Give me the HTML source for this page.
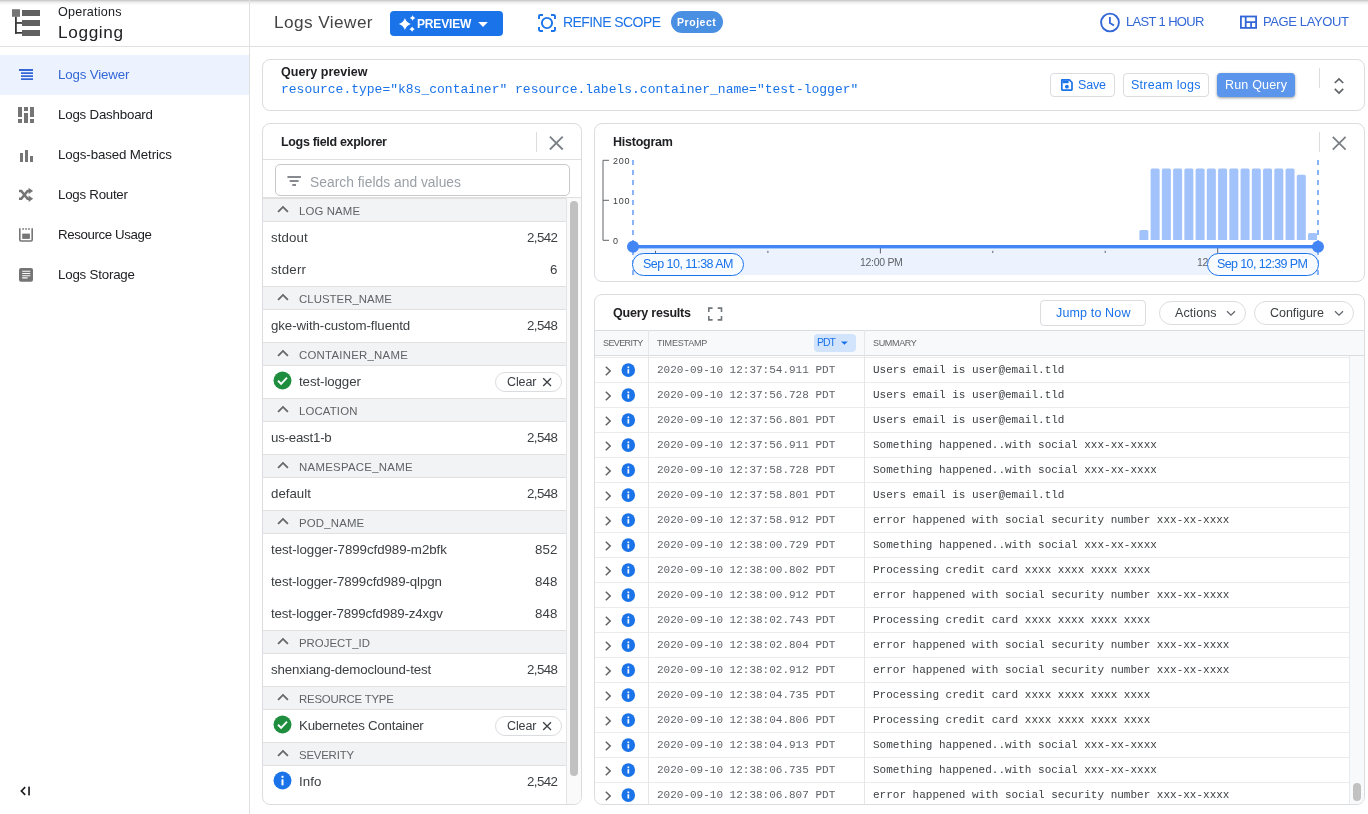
<!DOCTYPE html>
<html>
<head>
<meta charset="utf-8">
<title>Logs Viewer</title>
<style>
*{box-sizing:border-box;margin:0;padding:0}
html,body{width:1368px;height:814px;overflow:hidden;background:#fff}
body{font-family:"Liberation Sans",sans-serif;font-size:14px;color:#202124;position:relative}
.abs{position:absolute}
.t{position:absolute;white-space:nowrap;line-height:1;font-style:normal;will-change:transform}
svg{position:absolute;overflow:visible}
.mono{font-family:"Liberation Mono",monospace}
#topshadow{left:0;top:0;width:1368px;height:6px;background:linear-gradient(to bottom,#cdcdcd 0,#cdcdcd 1px,#e1e1e1 1px,#e1e1e1 2px,#eee 2px,#eee 3px,#f6f6f6 3px,#f6f6f6 4px,#fbfbfb 4px,#fbfbfb 5px,#fefefe 5px,#fefefe 6px)}
#side{left:0;top:0;width:250px;height:814px;border-right:1px solid #e0e0e0}
#sidehead{left:0;top:0;width:249px;height:47px;border-bottom:1px solid #e0e0e0}
#hdr{left:250px;top:0;width:1118px;height:47px;border-bottom:1px solid #e0e0e0}
.card{position:absolute;border:1px solid #dadce0;border-radius:8px;background:#fff}
.navsel{left:0;top:55px;width:249px;height:40px;background:#ecf3fe}
.btn{position:absolute;border:1px solid #dadce0;border-radius:4px;background:#fff}
.pill{position:absolute;border:1px solid #dadce0;border-radius:12px;background:#fff}
.sec{position:absolute;left:263px;width:303px;height:24px;background:#f1f3f4;border-top:1px solid #e0e0e0;border-bottom:1px solid #e0e0e0}
.hl{position:absolute;height:1px;background:#e0e0e0}
.vl{position:absolute;width:1px;background:#dadce0}
</style>
</head>
<body>
<div class="abs" id="topshadow"></div>
<div class="abs" id="side"></div>
<div class="abs" id="sidehead"></div>
<div class="abs" id="hdr"></div>

<!-- ===== SIDEBAR ===== -->
<svg style="left:0;top:0" width="60" height="47" viewBox="0 0 60 47">
  <rect x="12" y="9.2" width="8" height="7.6" fill="#757575"/>
  <rect x="22" y="10" width="18" height="6" fill="#616161"/>
  <rect x="22" y="20" width="18" height="6" fill="#616161"/>
  <rect x="22" y="30" width="18" height="6" fill="#616161"/>
  <rect x="15" y="16.8" width="1.8" height="16.9" fill="#383838"/><rect x="15" y="22.1" width="7" height="1.7" fill="#383838"/><rect x="15" y="32" width="7" height="1.7" fill="#383838"/>
</svg>
<div class="t" style="left:57.87px;top:6.03px;font-size:12.6px;letter-spacing:0.204px">Operations</div>
<div class="t" style="left:57.83px;top:24.04px;font-size:17.2px;letter-spacing:0.655px">Logging</div>

<div class="abs navsel"></div>
<svg style="left:0;top:55px" width="60" height="40" viewBox="0 55 60 40">
  <path d="M19 70H33M21 73.1H33M21 76.2H33M21 79.2H33" stroke="#3367d6" stroke-width="1.8" fill="none"/>
</svg>
<div class="t" style="left:57.87px;top:67.74px;font-size:13.3px;color:#3367d6;letter-spacing:-0.147px">Logs Viewer</div>
<div class="t" style="left:57.87px;top:107.74px;font-size:13.3px;letter-spacing:-0.201px">Logs Dashboard</div>
<div class="t" style="left:57.87px;top:147.74px;font-size:13.3px;letter-spacing:-0.122px">Logs-based Metrics</div>
<div class="t" style="left:57.87px;top:187.74px;font-size:13.3px;letter-spacing:-0.249px">Logs Router</div>
<div class="t" style="left:57.87px;top:227.74px;font-size:13.3px;letter-spacing:-0.391px">Resource Usage</div>
<div class="t" style="left:57.87px;top:267.74px;font-size:13.3px;letter-spacing:-0.195px">Logs Storage</div>

<!-- ===== HEADER ===== -->
<div class="t" style="left:274.13px;top:13.74px;font-size:17.2px;color:#444;letter-spacing:0.432px">Logs Viewer</div>

<!-- ===== CARDS ===== -->
<div class="card" id="qp" style="left:262px;top:59px;width:1103px;height:52px"></div>
<div class="card" id="lfe" style="left:262px;top:123px;width:320px;height:682px"></div>
<div class="card" id="hist" style="left:594px;top:123px;width:771px;height:159px"></div>
<div class="card" id="qr" style="left:594px;top:294px;width:771px;height:511px"></div>


<!-- sidebar icons -->
<svg style="left:0;top:95px" width="60" height="200" viewBox="0 95 60 200">
  <g fill="#757575">
    <!-- dashboard -->
    <rect x="18" y="107" width="4" height="10"/><rect x="18" y="119" width="4" height="4"/>
    <rect x="24" y="107" width="4" height="4"/><rect x="24" y="113" width="4" height="10"/>
    <rect x="30" y="107" width="4" height="10"/><rect x="30" y="119" width="4" height="4"/>
    <!-- metrics -->
    <rect x="20" y="153" width="3" height="9"/><rect x="25" y="150" width="3" height="12"/><rect x="30" y="156" width="3" height="6"/>
  </g>
  <!-- router / shuffle -->
  <path d="M19 190.9H21.3L27.6 198.7H29.5M19 198.7H21.3L27.6 190.9H29.5" fill="none" stroke="#757575" stroke-width="2.5"/>
  <path d="M28.6 187.7L33.1 190.9L28.6 194.1ZM28.6 195.5L33.1 198.7L28.6 201.9Z" fill="#757575"/>
  <!-- resource usage -->
  <path d="M19.8 228.2V239.8a1.2 1.2 0 0 0 1.2 1.2H31a1.2 1.2 0 0 0 1.2 -1.2V228.2" fill="none" stroke="#757575" stroke-width="1.6"/>
  <path d="M22.3 228.9H24M25.2 228.9H26.9M28.1 228.9H29.8" stroke="#757575" stroke-width="1.5" fill="none"/>
  <rect x="22.2" y="233.6" width="7.7" height="5.3" fill="#757575"/>
  <!-- storage -->
  <rect x="19" y="267.9" width="14" height="13.8" rx="2" fill="#757575"/>
  <path d="M22.2 271.3H30.3M22.2 273.5H30.3M22.2 275.7H30.3M22.2 277.9H27.6" stroke="#fff" stroke-width="1.1" fill="none"/>
  </svg>
<!-- collapse -->
<svg style="left:18px;top:784px" width="16" height="14" viewBox="0 0 16 14"><path d="M7.2 3.2L3.4 7l3.8 3.8" fill="none" stroke="#202124" stroke-width="1.7"/><rect x="10.2" y="2.6" width="1.7" height="8.8" fill="#202124"/></svg>

<!-- header controls -->
<div class="abs" style="left:390px;top:11px;width:113px;height:25px;background:#1a73e8;border-radius:4px"></div>
<svg style="left:390px;top:11px" width="113" height="25" viewBox="390 11 113 25">
  <path fill="#fff" d="M404.9 17.9 Q406.3 22.5 410.8 23.9 Q406.3 25.3 404.9 30 Q403.5 25.3 398.9 23.9 Q403.5 22.5 404.9 17.9Z"/>
  <path fill="#fff" d="M412.6 15.3 Q413.3 17.3 415.4 18 Q413.3 18.7 412.6 20.7 Q411.9 18.7 409.8 18 Q411.9 17.3 412.6 15.3Z"/>
  <path fill="#fff" d="M412.1 26.6 Q412.8 28.5 414.7 29.2 Q412.8 29.9 412.1 31.8 Q411.4 29.9 409.5 29.2 Q411.4 28.5 412.1 26.6Z"/>
  <path fill="#fff" d="M478.2 22.1H487.9L483.05 27.1Z"/>
</svg>
<div class="t" style="left:416.88px;top:17.54px;font-size:12px;color:#fff;font-weight:bold;letter-spacing:-0.154px">PREVIEW</div>

<svg style="left:530px;top:5px" width="40" height="37" viewBox="530 5 40 37">
  <g fill="none" stroke="#1a73e8" stroke-width="1.9">
    <circle cx="547" cy="23" r="5.1"/>
    <path d="M543 15H540.2a1.2 1.2 0 0 0 -1.2 1.2V19M551 15h2.8a1.2 1.2 0 0 1 1.2 1.2V19M543 31H540.2a1.2 1.2 0 0 1 -1.2 -1.2V27M551 31h2.8a1.2 1.2 0 0 0 1.2 -1.2V27"/>
  </g>
</svg>
<div class="t" style="left:562.86px;top:14.95px;font-size:14px;color:#1a73e8;letter-spacing:-0.569px">REFINE SCOPE</div>
<div class="abs" style="left:671px;top:11px;width:52px;height:22px;background:#4a90e2;border-radius:11px"></div>
<div class="t" style="left:677.39px;top:16.51px;font-size:10.5px;color:#fff;font-weight:bold;letter-spacing:0.543px">Project</div>

<svg style="left:1095px;top:8px" width="30" height="30" viewBox="1095 8 30 30">
  <circle cx="1110" cy="22.5" r="8.9" fill="none" stroke="#3367d6" stroke-width="1.9"/>
  <path d="M1109.9 17V23L1114 25.6" fill="none" stroke="#3367d6" stroke-width="1.8"/>
</svg>
<div class="t" style="left:1125.87px;top:15.2px;font-size:13px;color:#3367d6;letter-spacing:-0.656px">LAST 1 HOUR</div>
<svg style="left:1235px;top:10px" width="30" height="25" viewBox="1235 10 30 25">
  <g fill="none" stroke="#3367d6" stroke-width="1.8">
    <rect x="1240.9" y="16.5" width="15.2" height="11.4"/>
    <path d="M1245.7 16.5V28M1245.7 22.2H1256M1251.1 22.2V28"/>
  </g>
</svg>
<div class="t" style="left:1263.37px;top:15.2px;font-size:13px;color:#3367d6;letter-spacing:-0.387px">PAGE LAYOUT</div>

<!-- query preview -->
<div class="t" style="left:280.88px;top:66.02px;font-size:12.5px;color:#202124;font-weight:bold;letter-spacing:0.023px">Query preview</div>
<div class="t mono" style="left:280.87px;top:82.54px;font-size:13px;color:#1a73e8">resource.type="k8s_container" resource.labels.container_name="test-logger"</div>
<div class="btn" style="left:1050px;top:73px;width:65px;height:24px"></div>
<svg style="left:1058px;top:76px" width="18" height="18" viewBox="1058 76 18 18">
  <path d="M1061.8 79.9H1069.4L1072 82.5V89.2a1 1 0 0 1 -1 1H1062.8a1 1 0 0 1 -1 -1Z" fill="none" stroke="#1a73e8" stroke-width="1.7" stroke-linejoin="round"/>
  <rect x="1062.6" y="80.6" width="6" height="2.6" fill="#1a73e8"/>
  <circle cx="1066.9" cy="86.7" r="1.9" fill="#1a73e8"/>
</svg>
<div class="t" style="left:1078.17px;top:78.82px;font-size:12.5px;color:#1a73e8;letter-spacing:-0.188px">Save</div>
<div class="btn" style="left:1123px;top:73px;width:86px;height:24px"></div>
<div class="t" style="left:1131.47px;top:78.82px;font-size:12.5px;color:#1a73e8;letter-spacing:0.273px">Stream logs</div>
<div class="abs" style="left:1217px;top:73px;width:78px;height:24px;border-radius:4px;background:#5b95ec;box-shadow:0 1px 2px rgba(60,64,67,.35),0 1px 3px 1px rgba(60,64,67,.15)"></div>
<div class="t" style="left:1225.47px;top:78.82px;font-size:12.5px;color:#fff;letter-spacing:0.186px">Run Query</div>
<div class="vl" style="left:1319px;top:68px;height:20px"></div>
<svg style="left:1330px;top:74px" width="18" height="24" viewBox="1330 74 18 24">
  <path d="M1334.8 83L1339 78.9L1343.2 83M1334.8 88.9L1339 93L1343.2 88.9" fill="none" stroke="#5f6368" stroke-width="1.7"/>
</svg>
<!-- ===== logs field explorer ===== -->
<div class="t" style="left:281.38px;top:135.52px;font-size:12.5px;color:#202124;font-weight:bold;letter-spacing:-0.328px">Logs field explorer</div>
<div class="vl" style="left:536px;top:132px;height:20px"></div>
<svg style="left:545px;top:132px" width="22" height="22" viewBox="545 132 22 22"><path d="M549.9 136.7L562.7 149.5M562.7 136.7L549.9 149.5" stroke="#7a8086" stroke-width="1.8" fill="none"/></svg>
<div class="hl" style="left:263px;top:159px;width:318px"></div>
<div class="abs" style="left:275px;top:164px;width:295px;height:32px;border:1px solid #c6c8ca;border-radius:5px"></div>
<svg style="left:285px;top:172px" width="18" height="18" viewBox="285 172 18 18"><path d="M287.4 177H300.9M289.7 181H298.6M292.3 185H296" stroke="#5f6368" stroke-width="1.4" fill="none"/></svg>
<div class="t" style="left:309.86px;top:175.52px;font-size:13.8px;color:#9aa0a6;letter-spacing:0.028px">Search fields and values</div>
<div class="abs" style="left:566px;top:198px;width:15px;height:606px;background:#fafafa;border-left:1px solid #e4e4e4;border-bottom-right-radius:7px"></div>
<div class="abs" style="left:570px;top:201px;width:8px;height:575px;background:#c1c1c1;border-radius:4px"></div>
<div class="hl" style="left:263px;top:197px;width:318px"></div>
<div class="sec" style="top:198px"></div>
<svg style="left:276px;top:202px" width="14" height="12" viewBox="0 0 14 12"><path d="M2.1 9.8L7 4.9L11.9 9.8" stroke="#666" stroke-width="1.8" fill="none"/></svg>
<div class="t" style="left:298.89px;top:205.55px;font-size:11.4px;color:#5f6368;letter-spacing:0.123px">LOG NAME</div>
<div class="t" style="left:271.27px;top:230.74px;font-size:13.3px;color:#3c4043;letter-spacing:0.106px">stdout</div>
<div class="t" style="right:810.2px;top:230.74px;font-size:13.3px;color:#3c4043;letter-spacing:-0.579px;margin-right:0.579px">2,542</div>
<div class="t" style="left:271.27px;top:262.74px;font-size:13.3px;color:#3c4043;letter-spacing:0.193px">stderr</div>
<div class="t" style="right:810.2px;top:262.74px;font-size:13.3px;color:#3c4043">6</div>
<div class="sec" style="top:286px"></div>
<svg style="left:276px;top:290px" width="14" height="12" viewBox="0 0 14 12"><path d="M2.1 9.8L7 4.9L11.9 9.8" stroke="#666" stroke-width="1.8" fill="none"/></svg>
<div class="t" style="left:298.89px;top:293.55px;font-size:11.4px;color:#5f6368;letter-spacing:0.034px">CLUSTER_NAME</div>
<div class="t" style="left:271.27px;top:318.74px;font-size:13.3px;color:#3c4043;letter-spacing:-0.086px">gke-with-custom-fluentd</div>
<div class="t" style="right:810.2px;top:318.74px;font-size:13.3px;color:#3c4043;letter-spacing:-0.579px;margin-right:0.579px">2,548</div>
<div class="sec" style="top:342px"></div>
<svg style="left:276px;top:346px" width="14" height="12" viewBox="0 0 14 12"><path d="M2.1 9.8L7 4.9L11.9 9.8" stroke="#666" stroke-width="1.8" fill="none"/></svg>
<div class="t" style="left:298.89px;top:349.55px;font-size:11.4px;color:#5f6368;letter-spacing:0.255px">CONTAINER_NAME</div>
<svg style="left:272.5px;top:371px" width="19" height="19" viewBox="0 0 19 19"><circle cx="9.5" cy="9.5" r="9" fill="#1e8e3e"/><path d="M5 9.8L8.1 12.8L14 6.7" stroke="#fff" stroke-width="1.9" fill="none"/></svg>
<div class="t" style="left:299.17px;top:374.74px;font-size:13.3px;color:#3c4043;letter-spacing:-0.096px">test-logger</div>
<div class="abs" style="left:495px;top:372px;width:67px;height:20px;border:1px solid #dadce0;border-radius:10px;background:#fff"></div>
<div class="t" style="left:506.88px;top:376.02px;font-size:12.5px;color:#3c4043;letter-spacing:-0.109px">Clear</div>
<svg style="left:541px;top:376px" width="12" height="12" viewBox="0 0 12 12"><path d="M2.2 2.2L10 10M10 2.2L2.2 10" stroke="#3c4043" stroke-width="1.3" fill="none"/></svg>
<div class="sec" style="top:398px"></div>
<svg style="left:276px;top:402px" width="14" height="12" viewBox="0 0 14 12"><path d="M2.1 9.8L7 4.9L11.9 9.8" stroke="#666" stroke-width="1.8" fill="none"/></svg>
<div class="t" style="left:298.89px;top:405.55px;font-size:11.4px;color:#5f6368;letter-spacing:0.144px">LOCATION</div>
<div class="t" style="left:271.27px;top:430.74px;font-size:13.3px;color:#3c4043;letter-spacing:-0.229px">us-east1-b</div>
<div class="t" style="right:810.2px;top:430.74px;font-size:13.3px;color:#3c4043;letter-spacing:-0.579px;margin-right:0.579px">2,548</div>
<div class="sec" style="top:454px"></div>
<svg style="left:276px;top:458px" width="14" height="12" viewBox="0 0 14 12"><path d="M2.1 9.8L7 4.9L11.9 9.8" stroke="#666" stroke-width="1.8" fill="none"/></svg>
<div class="t" style="left:298.89px;top:461.55px;font-size:11.4px;color:#5f6368;letter-spacing:0.282px">NAMESPACE_NAME</div>
<div class="t" style="left:271.27px;top:486.74px;font-size:13.3px;color:#3c4043;letter-spacing:-0.012px">default</div>
<div class="t" style="right:810.2px;top:486.74px;font-size:13.3px;color:#3c4043;letter-spacing:-0.579px;margin-right:0.579px">2,548</div>
<div class="sec" style="top:510px"></div>
<svg style="left:276px;top:514px" width="14" height="12" viewBox="0 0 14 12"><path d="M2.1 9.8L7 4.9L11.9 9.8" stroke="#666" stroke-width="1.8" fill="none"/></svg>
<div class="t" style="left:298.89px;top:517.55px;font-size:11.4px;color:#5f6368;letter-spacing:0.18px">POD_NAME</div>
<div class="t" style="left:271.27px;top:542.74px;font-size:13.3px;color:#3c4043;letter-spacing:-0.057px">test-logger-7899cfd989-m2bfk</div>
<div class="t" style="right:810.2px;top:542.74px;font-size:13.3px;color:#3c4043;letter-spacing:0.139px;margin-right:-0.139px">852</div>
<div class="t" style="left:271.27px;top:574.74px;font-size:13.3px;color:#3c4043;letter-spacing:-0.106px">test-logger-7899cfd989-qlpgn</div>
<div class="t" style="right:810.2px;top:574.74px;font-size:13.3px;color:#3c4043;letter-spacing:0.139px;margin-right:-0.139px">848</div>
<div class="t" style="left:271.27px;top:606.74px;font-size:13.3px;color:#3c4043;letter-spacing:-0.147px">test-logger-7899cfd989-z4xgv</div>
<div class="t" style="right:810.2px;top:606.74px;font-size:13.3px;color:#3c4043;letter-spacing:0.139px;margin-right:-0.139px">848</div>
<div class="sec" style="top:630px"></div>
<svg style="left:276px;top:634px" width="14" height="12" viewBox="0 0 14 12"><path d="M2.1 9.8L7 4.9L11.9 9.8" stroke="#666" stroke-width="1.8" fill="none"/></svg>
<div class="t" style="left:298.89px;top:637.55px;font-size:11.4px;color:#5f6368">PROJECT_ID</div>
<div class="t" style="left:271.27px;top:662.74px;font-size:13.3px;color:#3c4043;letter-spacing:-0.133px">shenxiang-democlound-test</div>
<div class="t" style="right:810.2px;top:662.74px;font-size:13.3px;color:#3c4043;letter-spacing:-0.579px;margin-right:0.579px">2,548</div>
<div class="sec" style="top:686px"></div>
<svg style="left:276px;top:690px" width="14" height="12" viewBox="0 0 14 12"><path d="M2.1 9.8L7 4.9L11.9 9.8" stroke="#666" stroke-width="1.8" fill="none"/></svg>
<div class="t" style="left:298.89px;top:693.55px;font-size:11.4px;color:#5f6368;letter-spacing:-0.206px">RESOURCE TYPE</div>
<svg style="left:272.5px;top:715px" width="19" height="19" viewBox="0 0 19 19"><circle cx="9.5" cy="9.5" r="9" fill="#1e8e3e"/><path d="M5 9.8L8.1 12.8L14 6.7" stroke="#fff" stroke-width="1.9" fill="none"/></svg>
<div class="t" style="left:298.87px;top:718.74px;font-size:13.3px;color:#3c4043;letter-spacing:-0.242px">Kubernetes Container</div>
<div class="abs" style="left:495px;top:716px;width:67px;height:20px;border:1px solid #dadce0;border-radius:10px;background:#fff"></div>
<div class="t" style="left:506.88px;top:720.02px;font-size:12.5px;color:#3c4043;letter-spacing:-0.109px">Clear</div>
<svg style="left:541px;top:720px" width="12" height="12" viewBox="0 0 12 12"><path d="M2.2 2.2L10 10M10 2.2L2.2 10" stroke="#3c4043" stroke-width="1.3" fill="none"/></svg>
<div class="sec" style="top:742px"></div>
<svg style="left:276px;top:746px" width="14" height="12" viewBox="0 0 14 12"><path d="M2.1 9.8L7 4.9L11.9 9.8" stroke="#666" stroke-width="1.8" fill="none"/></svg>
<div class="t" style="left:298.89px;top:749.55px;font-size:11.4px;color:#5f6368;letter-spacing:-0.192px">SEVERITY</div>
<svg style="left:272.5px;top:771px" width="19" height="19" viewBox="0 0 19 19"><circle cx="9.5" cy="9.5" r="9" fill="#1a73e8"/><rect x="8.5" y="8.3" width="2" height="6" fill="#fff"/><rect x="8.5" y="4.8" width="2" height="2.1" fill="#fff"/></svg>
<div class="t" style="left:298.87px;top:774.74px;font-size:13.3px;color:#3c4043;letter-spacing:0.059px">Info</div>
<div class="t" style="right:810.2px;top:774.74px;font-size:13.3px;color:#3c4043;letter-spacing:-0.579px;margin-right:0.579px">2,542</div>
<!-- ===== histogram ===== -->
<div class="t" style="left:613.17px;top:136.22px;font-size:12.5px;color:#202124;font-weight:bold;letter-spacing:-0.236px">Histogram</div>
<div class="vl" style="left:1319px;top:132px;height:20px"></div>
<svg style="left:1328px;top:132px" width="22" height="22" viewBox="1328 132 22 22"><path d="M1332.8 136.8L1345.6 149.6M1345.6 136.8L1332.8 149.6" stroke="#7a8086" stroke-width="1.8" fill="none"/></svg>
<svg style="left:595px;top:124px" width="769" height="157" viewBox="595 124 769 157">
<rect x="633" y="248" width="685" height="27" fill="#edf3fe"/>
<g fill="#a1c2fa" transform="translate(-0.9,0)"><path d="M1140.28 240V231.4a1.5 1.5 0 0 1 1.5 -1.5h6a1.5 1.5 0 0 1 1.5 1.5V240Z"/><path d="M1151.52 240V169.9a1.5 1.5 0 0 1 1.5 -1.5h6a1.5 1.5 0 0 1 1.5 1.5V240Z"/><path d="M1162.77 240V169.9a1.5 1.5 0 0 1 1.5 -1.5h6a1.5 1.5 0 0 1 1.5 1.5V240Z"/><path d="M1174.01 240V169.9a1.5 1.5 0 0 1 1.5 -1.5h6a1.5 1.5 0 0 1 1.5 1.5V240Z"/><path d="M1185.26 240V169.9a1.5 1.5 0 0 1 1.5 -1.5h6a1.5 1.5 0 0 1 1.5 1.5V240Z"/><path d="M1196.50 240V169.9a1.5 1.5 0 0 1 1.5 -1.5h6a1.5 1.5 0 0 1 1.5 1.5V240Z"/><path d="M1207.74 240V169.9a1.5 1.5 0 0 1 1.5 -1.5h6a1.5 1.5 0 0 1 1.5 1.5V240Z"/><path d="M1218.99 240V169.9a1.5 1.5 0 0 1 1.5 -1.5h6a1.5 1.5 0 0 1 1.5 1.5V240Z"/><path d="M1230.23 240V169.9a1.5 1.5 0 0 1 1.5 -1.5h6a1.5 1.5 0 0 1 1.5 1.5V240Z"/><path d="M1241.48 240V169.9a1.5 1.5 0 0 1 1.5 -1.5h6a1.5 1.5 0 0 1 1.5 1.5V240Z"/><path d="M1252.72 240V169.9a1.5 1.5 0 0 1 1.5 -1.5h6a1.5 1.5 0 0 1 1.5 1.5V240Z"/><path d="M1263.96 240V169.9a1.5 1.5 0 0 1 1.5 -1.5h6a1.5 1.5 0 0 1 1.5 1.5V240Z"/><path d="M1275.21 240V169.9a1.5 1.5 0 0 1 1.5 -1.5h6a1.5 1.5 0 0 1 1.5 1.5V240Z"/><path d="M1286.45 240V169.9a1.5 1.5 0 0 1 1.5 -1.5h6a1.5 1.5 0 0 1 1.5 1.5V240Z"/><path d="M1297.70 240V176.2a1.5 1.5 0 0 1 1.5 -1.5h6a1.5 1.5 0 0 1 1.5 1.5V240Z"/><path d="M1308.94 240V234.5a1.5 1.5 0 0 1 1.5 -1.5h6a1.5 1.5 0 0 1 1.5 1.5V240Z"/></g>
<path d="M609 160.3H603V240.3H609M603 200.3H609" fill="none" stroke="#5f6368" stroke-width="1"/>
<path d="M633 160V275M1318 160V275" stroke="#8ab4f8" stroke-width="2" stroke-dasharray="5 5" fill="none"/>
<path d="M655.5 250.8V253M767.9 250.8V253M880.4 248V253.4M992.8 250.8V253M1105.2 250.8V253M1217.7 248V253.4" stroke="#5f6368" stroke-width="1" fill="none"/>
<rect x="633" y="245" width="685" height="3.4" fill="#4285f4"/>
<circle cx="633" cy="246.7" r="6" fill="#4285f4"/><circle cx="1318" cy="246.7" r="6" fill="#4285f4"/>
</svg>
<div class="t" style="left:613.31px;top:156.78px;font-size:9px;color:#3c4043;letter-spacing:0.792px">200</div>
<div class="t" style="left:613.31px;top:196.78px;font-size:9px;color:#3c4043;letter-spacing:0.792px">100</div>
<div class="t" style="left:613.31px;top:236.78px;font-size:9px;color:#3c4043">0</div>
<div class="t" style="left:860.19px;top:257.31px;font-size:10.5px;color:#5f6368;letter-spacing:-0.298px">12:00 PM</div>
<div class="t" style="left:1197.39px;top:257.31px;font-size:10.5px;color:#5f6368;letter-spacing:-0.298px">12:30 PM</div>
<div class="abs" style="left:632px;top:253px;width:112px;height:23px;border:1.2px solid #1a73e8;border-radius:11.5px;background:#f8fbff"></div>
<div class="t" style="left:643.17px;top:258.22px;font-size:12.5px;color:#1a73e8;letter-spacing:-0.534px">Sep 10, 11:38 AM</div>
<div class="abs" style="left:1206.5px;top:253px;width:112px;height:23px;border:1.2px solid #1a73e8;border-radius:11.5px;background:#f8fbff"></div>
<div class="t" style="left:1216.88px;top:258.22px;font-size:12.5px;color:#1a73e8;letter-spacing:-0.609px">Sep 10, 12:39 PM</div>
<!-- ===== query results ===== -->
<div class="t" style="left:613.17px;top:307.22px;font-size:12.5px;color:#202124;font-weight:bold;letter-spacing:-0.221px">Query results</div>
<svg style="left:706px;top:305px" width="18" height="18" viewBox="706 305 18 18"><path d="M708.8 312V308.1H712.6M717.7 308.1H721.5V312M721.5 316V319.9H717.7M712.6 319.9H708.8V316" stroke="#70757a" stroke-width="1.6" fill="none"/></svg>
<div class="btn" style="left:1040px;top:300px;width:106px;height:26px"></div>
<div class="t" style="left:1055.88px;top:307.12px;font-size:12.5px;color:#1a73e8;letter-spacing:0.148px">Jump to Now</div>
<div class="pill" style="left:1159px;top:301px;width:87px;height:24px"></div>
<div class="t" style="left:1174.88px;top:307.12px;font-size:12.5px;color:#3c4043;letter-spacing:0.073px">Actions</div>
<svg style="left:1224px;top:307px" width="14" height="12" viewBox="0 0 14 12"><path d="M3 4.3L7 8.2L11 4.3" stroke="#5f6368" stroke-width="1.2" fill="none"/></svg>
<div class="pill" style="left:1254px;top:301px;width:100px;height:24px"></div>
<div class="t" style="left:1270.17px;top:307.12px;font-size:12.5px;color:#3c4043;letter-spacing:-0.033px">Configure</div>
<svg style="left:1332px;top:307px" width="14" height="12" viewBox="0 0 14 12"><path d="M3 4.3L7 8.2L11 4.3" stroke="#5f6368" stroke-width="1.2" fill="none"/></svg>
<div class="abs" id="tbl" style="left:595px;top:330px;width:769px;height:474px;overflow:hidden;border-bottom-left-radius:7px;border-bottom-right-radius:7px">
<div class="abs" style="left:0;top:0;width:769px;height:26px;background:#f8f9fa;border-top:1px solid #dadce0;border-bottom:1px solid #dadce0"></div>
<div class="abs" style="left:754px;top:26px;width:15px;height:448px;background:#f8f9fa;border-left:1px solid #e8eaed"></div>
<div class="abs" style="left:758px;top:453px;width:8px;height:18px;background:#c1c1c1;border-radius:4px"></div>
<div class="abs" style="left:219px;top:4px;width:42px;height:18px;background:#d2e3fc;border-radius:4px"></div>
<svg style="left:245px;top:10px" width="9" height="6" viewBox="0 0 9 6"><path d="M1 1.5H7.8L4.4 4.8Z" fill="#1a73e8"/></svg>
<div class="hl" style="left:0;top:27px;width:754px;background:#ececec"></div>
<div class="hl" style="left:0;top:52px;width:754px;background:#ececec"></div>
<div class="hl" style="left:0;top:77px;width:754px;background:#ececec"></div>
<div class="hl" style="left:0;top:102px;width:754px;background:#ececec"></div>
<div class="hl" style="left:0;top:127px;width:754px;background:#ececec"></div>
<div class="hl" style="left:0;top:152px;width:754px;background:#ececec"></div>
<div class="hl" style="left:0;top:177px;width:754px;background:#ececec"></div>
<div class="hl" style="left:0;top:202px;width:754px;background:#ececec"></div>
<div class="hl" style="left:0;top:227px;width:754px;background:#ececec"></div>
<div class="hl" style="left:0;top:252px;width:754px;background:#ececec"></div>
<div class="hl" style="left:0;top:277px;width:754px;background:#ececec"></div>
<div class="hl" style="left:0;top:302px;width:754px;background:#ececec"></div>
<div class="hl" style="left:0;top:327px;width:754px;background:#ececec"></div>
<div class="hl" style="left:0;top:352px;width:754px;background:#ececec"></div>
<div class="hl" style="left:0;top:377px;width:754px;background:#ececec"></div>
<div class="hl" style="left:0;top:402px;width:754px;background:#ececec"></div>
<div class="hl" style="left:0;top:427px;width:754px;background:#ececec"></div>
<div class="hl" style="left:0;top:452px;width:754px;background:#ececec"></div>
<div class="vl" style="left:53px;top:0;height:474px;background:#e6e6e6"></div>
<div class="vl" style="left:269px;top:0;height:474px;background:#e6e6e6"></div>
<svg style="left:8px;top:32px" width="36" height="16" viewBox="0 0 36 16"><path d="M2.8 4.7L7.2 9L2.8 13.3" stroke="#616161" stroke-width="1.5" fill="none"/><circle cx="25.3" cy="8.1" r="6.8" fill="#1a73e8"/><rect x="24.5" y="7.2" width="1.7" height="4.3" fill="#fff"/><rect x="24.5" y="4.5" width="1.7" height="1.7" fill="#fff"/></svg>
<svg style="left:8px;top:57px" width="36" height="16" viewBox="0 0 36 16"><path d="M2.8 4.7L7.2 9L2.8 13.3" stroke="#616161" stroke-width="1.5" fill="none"/><circle cx="25.3" cy="8.1" r="6.8" fill="#1a73e8"/><rect x="24.5" y="7.2" width="1.7" height="4.3" fill="#fff"/><rect x="24.5" y="4.5" width="1.7" height="1.7" fill="#fff"/></svg>
<svg style="left:8px;top:82px" width="36" height="16" viewBox="0 0 36 16"><path d="M2.8 4.7L7.2 9L2.8 13.3" stroke="#616161" stroke-width="1.5" fill="none"/><circle cx="25.3" cy="8.1" r="6.8" fill="#1a73e8"/><rect x="24.5" y="7.2" width="1.7" height="4.3" fill="#fff"/><rect x="24.5" y="4.5" width="1.7" height="1.7" fill="#fff"/></svg>
<svg style="left:8px;top:107px" width="36" height="16" viewBox="0 0 36 16"><path d="M2.8 4.7L7.2 9L2.8 13.3" stroke="#616161" stroke-width="1.5" fill="none"/><circle cx="25.3" cy="8.1" r="6.8" fill="#1a73e8"/><rect x="24.5" y="7.2" width="1.7" height="4.3" fill="#fff"/><rect x="24.5" y="4.5" width="1.7" height="1.7" fill="#fff"/></svg>
<svg style="left:8px;top:132px" width="36" height="16" viewBox="0 0 36 16"><path d="M2.8 4.7L7.2 9L2.8 13.3" stroke="#616161" stroke-width="1.5" fill="none"/><circle cx="25.3" cy="8.1" r="6.8" fill="#1a73e8"/><rect x="24.5" y="7.2" width="1.7" height="4.3" fill="#fff"/><rect x="24.5" y="4.5" width="1.7" height="1.7" fill="#fff"/></svg>
<svg style="left:8px;top:157px" width="36" height="16" viewBox="0 0 36 16"><path d="M2.8 4.7L7.2 9L2.8 13.3" stroke="#616161" stroke-width="1.5" fill="none"/><circle cx="25.3" cy="8.1" r="6.8" fill="#1a73e8"/><rect x="24.5" y="7.2" width="1.7" height="4.3" fill="#fff"/><rect x="24.5" y="4.5" width="1.7" height="1.7" fill="#fff"/></svg>
<svg style="left:8px;top:182px" width="36" height="16" viewBox="0 0 36 16"><path d="M2.8 4.7L7.2 9L2.8 13.3" stroke="#616161" stroke-width="1.5" fill="none"/><circle cx="25.3" cy="8.1" r="6.8" fill="#1a73e8"/><rect x="24.5" y="7.2" width="1.7" height="4.3" fill="#fff"/><rect x="24.5" y="4.5" width="1.7" height="1.7" fill="#fff"/></svg>
<svg style="left:8px;top:207px" width="36" height="16" viewBox="0 0 36 16"><path d="M2.8 4.7L7.2 9L2.8 13.3" stroke="#616161" stroke-width="1.5" fill="none"/><circle cx="25.3" cy="8.1" r="6.8" fill="#1a73e8"/><rect x="24.5" y="7.2" width="1.7" height="4.3" fill="#fff"/><rect x="24.5" y="4.5" width="1.7" height="1.7" fill="#fff"/></svg>
<svg style="left:8px;top:232px" width="36" height="16" viewBox="0 0 36 16"><path d="M2.8 4.7L7.2 9L2.8 13.3" stroke="#616161" stroke-width="1.5" fill="none"/><circle cx="25.3" cy="8.1" r="6.8" fill="#1a73e8"/><rect x="24.5" y="7.2" width="1.7" height="4.3" fill="#fff"/><rect x="24.5" y="4.5" width="1.7" height="1.7" fill="#fff"/></svg>
<svg style="left:8px;top:257px" width="36" height="16" viewBox="0 0 36 16"><path d="M2.8 4.7L7.2 9L2.8 13.3" stroke="#616161" stroke-width="1.5" fill="none"/><circle cx="25.3" cy="8.1" r="6.8" fill="#1a73e8"/><rect x="24.5" y="7.2" width="1.7" height="4.3" fill="#fff"/><rect x="24.5" y="4.5" width="1.7" height="1.7" fill="#fff"/></svg>
<svg style="left:8px;top:282px" width="36" height="16" viewBox="0 0 36 16"><path d="M2.8 4.7L7.2 9L2.8 13.3" stroke="#616161" stroke-width="1.5" fill="none"/><circle cx="25.3" cy="8.1" r="6.8" fill="#1a73e8"/><rect x="24.5" y="7.2" width="1.7" height="4.3" fill="#fff"/><rect x="24.5" y="4.5" width="1.7" height="1.7" fill="#fff"/></svg>
<svg style="left:8px;top:307px" width="36" height="16" viewBox="0 0 36 16"><path d="M2.8 4.7L7.2 9L2.8 13.3" stroke="#616161" stroke-width="1.5" fill="none"/><circle cx="25.3" cy="8.1" r="6.8" fill="#1a73e8"/><rect x="24.5" y="7.2" width="1.7" height="4.3" fill="#fff"/><rect x="24.5" y="4.5" width="1.7" height="1.7" fill="#fff"/></svg>
<svg style="left:8px;top:332px" width="36" height="16" viewBox="0 0 36 16"><path d="M2.8 4.7L7.2 9L2.8 13.3" stroke="#616161" stroke-width="1.5" fill="none"/><circle cx="25.3" cy="8.1" r="6.8" fill="#1a73e8"/><rect x="24.5" y="7.2" width="1.7" height="4.3" fill="#fff"/><rect x="24.5" y="4.5" width="1.7" height="1.7" fill="#fff"/></svg>
<svg style="left:8px;top:357px" width="36" height="16" viewBox="0 0 36 16"><path d="M2.8 4.7L7.2 9L2.8 13.3" stroke="#616161" stroke-width="1.5" fill="none"/><circle cx="25.3" cy="8.1" r="6.8" fill="#1a73e8"/><rect x="24.5" y="7.2" width="1.7" height="4.3" fill="#fff"/><rect x="24.5" y="4.5" width="1.7" height="1.7" fill="#fff"/></svg>
<svg style="left:8px;top:382px" width="36" height="16" viewBox="0 0 36 16"><path d="M2.8 4.7L7.2 9L2.8 13.3" stroke="#616161" stroke-width="1.5" fill="none"/><circle cx="25.3" cy="8.1" r="6.8" fill="#1a73e8"/><rect x="24.5" y="7.2" width="1.7" height="4.3" fill="#fff"/><rect x="24.5" y="4.5" width="1.7" height="1.7" fill="#fff"/></svg>
<svg style="left:8px;top:407px" width="36" height="16" viewBox="0 0 36 16"><path d="M2.8 4.7L7.2 9L2.8 13.3" stroke="#616161" stroke-width="1.5" fill="none"/><circle cx="25.3" cy="8.1" r="6.8" fill="#1a73e8"/><rect x="24.5" y="7.2" width="1.7" height="4.3" fill="#fff"/><rect x="24.5" y="4.5" width="1.7" height="1.7" fill="#fff"/></svg>
<svg style="left:8px;top:432px" width="36" height="16" viewBox="0 0 36 16"><path d="M2.8 4.7L7.2 9L2.8 13.3" stroke="#616161" stroke-width="1.5" fill="none"/><circle cx="25.3" cy="8.1" r="6.8" fill="#1a73e8"/><rect x="24.5" y="7.2" width="1.7" height="4.3" fill="#fff"/><rect x="24.5" y="4.5" width="1.7" height="1.7" fill="#fff"/></svg>
<svg style="left:8px;top:457px" width="36" height="16" viewBox="0 0 36 16"><path d="M2.8 4.7L7.2 9L2.8 13.3" stroke="#616161" stroke-width="1.5" fill="none"/><circle cx="25.3" cy="8.1" r="6.8" fill="#1a73e8"/><rect x="24.5" y="7.2" width="1.7" height="4.3" fill="#fff"/><rect x="24.5" y="4.5" width="1.7" height="1.7" fill="#fff"/></svg>
</div>
<div class="t" style="left:602.91px;top:338.68px;font-size:9px;color:#5f6368;letter-spacing:-0.6px">SEVERITY</div>
<div class="t" style="left:657.11px;top:338.68px;font-size:9px;color:#5f6368;letter-spacing:-0.191px">TIMESTAMP</div>
<div class="t" style="left:872.91px;top:338.68px;font-size:9px;color:#5f6368;letter-spacing:-0.338px">SUMMARY</div>
<div class="t" style="left:817.39px;top:337.21px;font-size:10.5px;color:#1a73e8;letter-spacing:-1.066px">PDT</div>
<div class="t mono" style="left:656.89px;top:365.47px;font-size:11px;color:#5f6368">2020-09-10 12:37:54.911 PDT</div>
<div class="t mono" style="left:872.89px;top:365.47px;font-size:11px;color:#3c4043">Users email is user@email.tld</div>
<div class="t mono" style="left:656.89px;top:390.47px;font-size:11px;color:#5f6368">2020-09-10 12:37:56.728 PDT</div>
<div class="t mono" style="left:872.89px;top:390.47px;font-size:11px;color:#3c4043">Users email is user@email.tld</div>
<div class="t mono" style="left:656.89px;top:415.47px;font-size:11px;color:#5f6368">2020-09-10 12:37:56.801 PDT</div>
<div class="t mono" style="left:872.89px;top:415.47px;font-size:11px;color:#3c4043">Users email is user@email.tld</div>
<div class="t mono" style="left:656.89px;top:440.47px;font-size:11px;color:#5f6368">2020-09-10 12:37:56.911 PDT</div>
<div class="t mono" style="left:872.89px;top:440.47px;font-size:11px;color:#3c4043">Something happened..with social xxx-xx-xxxx</div>
<div class="t mono" style="left:656.89px;top:465.47px;font-size:11px;color:#5f6368">2020-09-10 12:37:58.728 PDT</div>
<div class="t mono" style="left:872.89px;top:465.47px;font-size:11px;color:#3c4043">Something happened..with social xxx-xx-xxxx</div>
<div class="t mono" style="left:656.89px;top:490.47px;font-size:11px;color:#5f6368">2020-09-10 12:37:58.801 PDT</div>
<div class="t mono" style="left:872.89px;top:490.47px;font-size:11px;color:#3c4043">Users email is user@email.tld</div>
<div class="t mono" style="left:656.89px;top:515.47px;font-size:11px;color:#5f6368">2020-09-10 12:37:58.912 PDT</div>
<div class="t mono" style="left:872.89px;top:515.47px;font-size:11px;color:#3c4043">error happened with social security number xxx-xx-xxxx</div>
<div class="t mono" style="left:656.89px;top:540.47px;font-size:11px;color:#5f6368">2020-09-10 12:38:00.729 PDT</div>
<div class="t mono" style="left:872.89px;top:540.47px;font-size:11px;color:#3c4043">Something happened..with social xxx-xx-xxxx</div>
<div class="t mono" style="left:656.89px;top:565.47px;font-size:11px;color:#5f6368">2020-09-10 12:38:00.802 PDT</div>
<div class="t mono" style="left:872.89px;top:565.47px;font-size:11px;color:#3c4043">Processing credit card xxxx xxxx xxxx xxxx</div>
<div class="t mono" style="left:656.89px;top:590.47px;font-size:11px;color:#5f6368">2020-09-10 12:38:00.912 PDT</div>
<div class="t mono" style="left:872.89px;top:590.47px;font-size:11px;color:#3c4043">error happened with social security number xxx-xx-xxxx</div>
<div class="t mono" style="left:656.89px;top:615.47px;font-size:11px;color:#5f6368">2020-09-10 12:38:02.743 PDT</div>
<div class="t mono" style="left:872.89px;top:615.47px;font-size:11px;color:#3c4043">Processing credit card xxxx xxxx xxxx xxxx</div>
<div class="t mono" style="left:656.89px;top:640.47px;font-size:11px;color:#5f6368">2020-09-10 12:38:02.804 PDT</div>
<div class="t mono" style="left:872.89px;top:640.47px;font-size:11px;color:#3c4043">error happened with social security number xxx-xx-xxxx</div>
<div class="t mono" style="left:656.89px;top:665.47px;font-size:11px;color:#5f6368">2020-09-10 12:38:02.912 PDT</div>
<div class="t mono" style="left:872.89px;top:665.47px;font-size:11px;color:#3c4043">error happened with social security number xxx-xx-xxxx</div>
<div class="t mono" style="left:656.89px;top:690.47px;font-size:11px;color:#5f6368">2020-09-10 12:38:04.735 PDT</div>
<div class="t mono" style="left:872.89px;top:690.47px;font-size:11px;color:#3c4043">Processing credit card xxxx xxxx xxxx xxxx</div>
<div class="t mono" style="left:656.89px;top:715.47px;font-size:11px;color:#5f6368">2020-09-10 12:38:04.806 PDT</div>
<div class="t mono" style="left:872.89px;top:715.47px;font-size:11px;color:#3c4043">Processing credit card xxxx xxxx xxxx xxxx</div>
<div class="t mono" style="left:656.89px;top:740.47px;font-size:11px;color:#5f6368">2020-09-10 12:38:04.913 PDT</div>
<div class="t mono" style="left:872.89px;top:740.47px;font-size:11px;color:#3c4043">Something happened..with social xxx-xx-xxxx</div>
<div class="t mono" style="left:656.89px;top:765.47px;font-size:11px;color:#5f6368">2020-09-10 12:38:06.735 PDT</div>
<div class="t mono" style="left:872.89px;top:765.47px;font-size:11px;color:#3c4043">Something happened..with social xxx-xx-xxxx</div>
<div class="t mono" style="left:656.89px;top:790.47px;font-size:11px;color:#5f6368">2020-09-10 12:38:06.807 PDT</div>
<div class="t mono" style="left:872.89px;top:790.47px;font-size:11px;color:#3c4043">error happened with social security number xxx-xx-xxxx</div>
<!--MORE-->
</body>
</html>
